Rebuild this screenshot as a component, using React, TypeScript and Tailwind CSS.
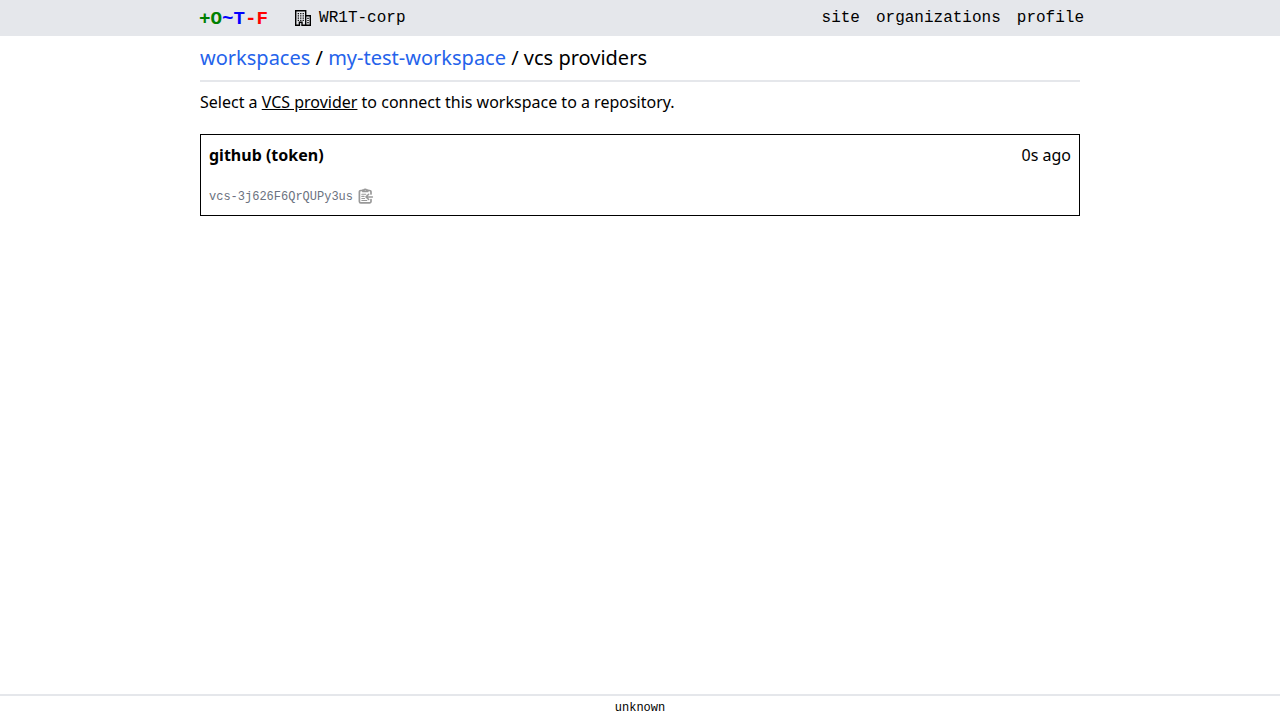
import React from "react";

function BuildingIcon() {
  return (
    <svg className="ml-[27px] mr-2 h-4 w-4" viewBox="0 0 16 16" fill="none" stroke="currentColor">
      <path d="M.7 15.3V.7h10v14.6M10.7 5.7h4.6v9.6M0 15.3h4.4v-3h2.6v3H16" strokeWidth="1.4" />
      <path d="M2.7 3.5h6.2M2.7 5.75h6.2M2.7 8h6.2M2.7 10.25h6.2" strokeWidth="1.25" strokeDasharray="1.25 1.2" />
      <path d="M12.3 8.3h1.4M12.3 10.5h1.4M12.3 12.7h1.4" strokeWidth="1.2" />
    </svg>
  );
}

function ClipboardIcon() {
  return (
    <svg className="mb-px h-4 w-4" viewBox="0 0 16 16" fill="none" stroke="#999" strokeWidth="1.7" strokeLinecap="round" strokeLinejoin="round">
      <path d="M4.5 2.5H2.8A1.4 1.4 0 0 0 1.4 3.9v9.5a1.4 1.4 0 0 0 1.4 1.4h8.8a1.4 1.4 0 0 0 1.4-1.4v-1.8M13 6V3.9a1.4 1.4 0 0 0-1.4-1.4h-1.5" />
      <path d="M4.9 2h1.2c.2-1 2-1 2.2 0h1.4v1.5H4.9z" />
      <path d="M3.8 6.2h4M3.8 8.4h2.3M3.8 10.5h2.8M3.8 12.5h5" strokeWidth="1.1" />
      <path d="M14.4 8.9H8.2M10.7 6.3 8 8.9l2.7 2.6" strokeWidth="1.5" />
    </svg>
  );
}

export default function App() {
  return (
    <div className="flex h-screen flex-col bg-white font-['Noto_Sans',sans-serif] text-base text-black">
      <header className="flex h-9 justify-center bg-gray-200 font-['Liberation_Mono',monospace]">
        <div className="flex w-[880px] items-center justify-between">
          <div className="flex items-center">
            <span className="-ml-px pt-px text-[19.2px] leading-6 font-bold">
              <span className="text-[green]">+O</span><span className="text-[blue]">~T</span><span className="text-[red]">-F</span>
            </span>
            <BuildingIcon />
            <span>WR1T-corp</span>
          </div>
          <nav className="-mr-1 flex gap-4">
            <a>site</a><a>organizations</a><a>profile</a>
          </nav>
        </div>
      </header>
      <main className="mx-auto flex w-[880px] grow flex-col">
        <div className="border-b-2 border-gray-200 py-2 text-xl">
          <a className="text-[#2563eb]">workspaces</a> / <a className="text-[#2563eb]">my-test-workspace</a> / vcs providers
        </div>
        <p className="mt-2">Select a <a className="underline">VCS provider</a> to connect this workspace to a repository.</p>
        <div className="mt-5 flex h-[82px] flex-col justify-between border border-black p-2">
          <div className="flex justify-between"><b>github (token)</b><span>0s ago</span></div>
          <div className="mb-0.5 flex items-center gap-[5px] font-['Liberation_Mono',monospace] text-xs text-[#6b7280]">
            <span>vcs-3j626F6QrQUPy3us</span>
            <ClipboardIcon />
          </div>
        </div>
      </main>
      <footer className="border-t-2 border-gray-200 py-1 text-center font-['Liberation_Mono',monospace] text-xs">unknown</footer>
    </div>
  );
}
